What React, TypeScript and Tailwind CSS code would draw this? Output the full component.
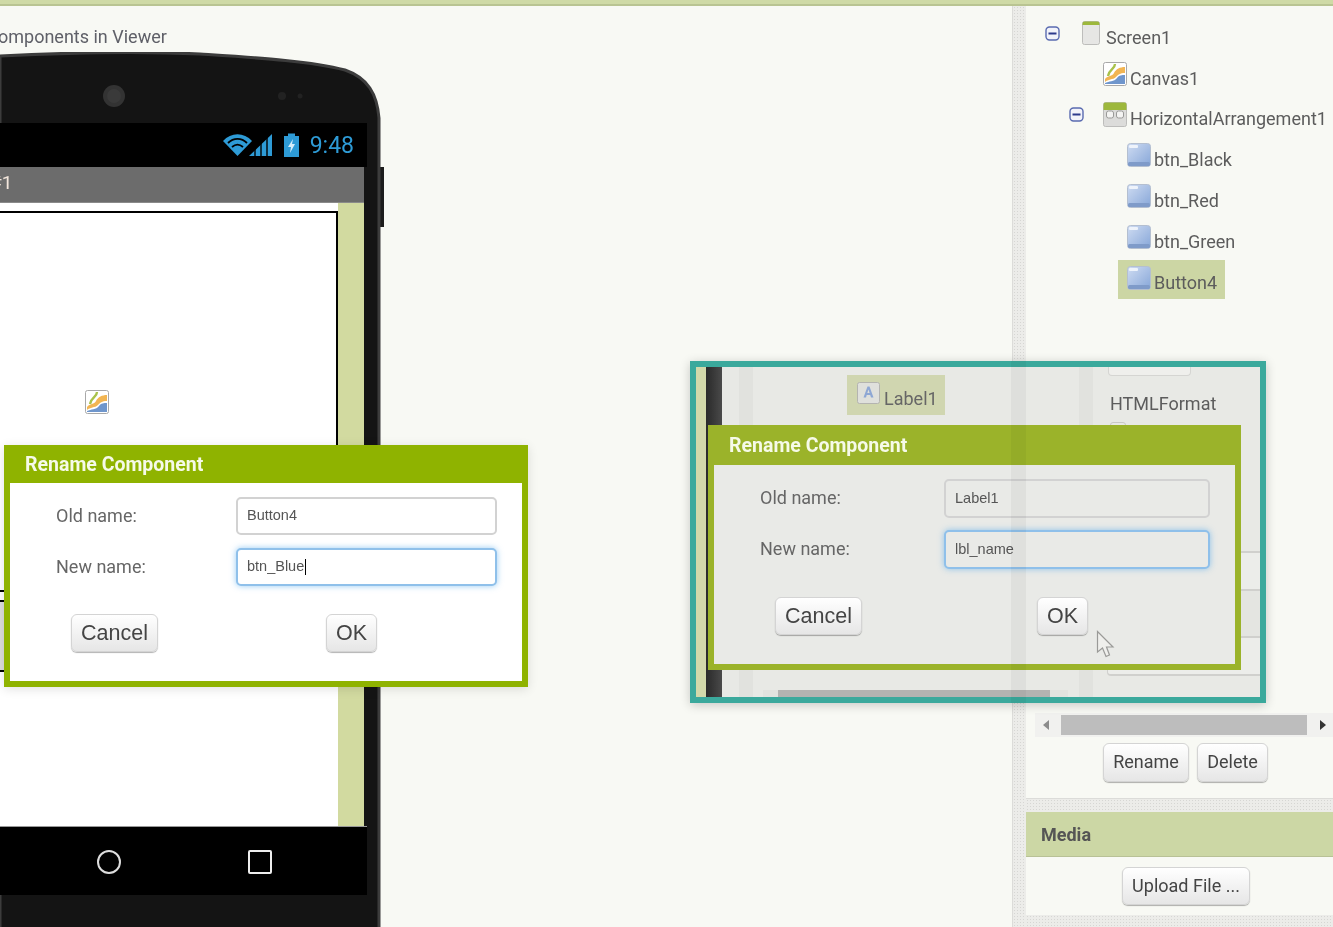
import React from 'react';

const texture = 'bg-[#ecece9] bg-[radial-gradient(#d6d6d3_1px,transparent_1px)] bg-[length:3px_3px]';
const btn = 'flex items-center justify-center rounded-md border border-[#d4d4d4] bg-gradient-to-b from-white to-[#e6e6e6] shadow-[0_1px_1px_rgba(0,0,0,0.3)] text-[#444]';

const MinusBox = () => (
  <svg width="15" height="15" viewBox="0 0 15 15">
    <rect x="1" y="1" width="13" height="13" rx="3.5" fill="#f2f3fa" stroke="#5a6bb0" strokeWidth="1.4" />
    <rect x="3.5" y="6.5" width="8" height="2" fill="#2d3a8c" />
  </svg>
);

const CanvasIcon = () => (
  <svg width="24" height="24" viewBox="0 0 24 24">
    <rect x="0.5" y="0.5" width="23" height="23" rx="2" fill="#fff" stroke="#a8a8a8" />
    <path d="M2 17 C5 13 9 15 11 11 C13 7 17 5 22 5 V11 C17 11 15 13 13 15 C10 18 5 17 2 20 Z" fill="#f2b552" />
    <path d="M2 21 C6 19 11 20 14 16 C16 13 19 13 22 13 V22 H2 Z" fill="#6f96cc" />
    <path d="M12 2 C12 7 6 7 5 14" fill="none" stroke="#a9c24a" strokeWidth="2.4" />
  </svg>
);

const ScreenIcon = () => (
  <svg width="18" height="24" viewBox="0 0 18 24">
    <rect x="0.5" y="0.5" width="17" height="23" rx="2" fill="#e6e6e4" stroke="#bdbdbb" />
    <path d="M0.5 6 V2.5 a2 2 0 0 1 2 -2 h13 a2 2 0 0 1 2 2 V4 H0.5 Z" fill="#9db83c" />
  </svg>
);

const ArrangementIcon = () => (
  <svg width="24" height="25" viewBox="0 0 24 25">
    <rect x="0.5" y="0.5" width="23" height="24" rx="2" fill="#dcdcda" stroke="#bdbdbb" />
    <path d="M0.5 8 V2.5 a2 2 0 0 1 2 -2 h19 a2 2 0 0 1 2 2 V8 Z" fill="#9db83c" />
    <rect x="3.5" y="9" width="7" height="7" rx="2" fill="#f4f4f2" stroke="#9a9a98" />
    <rect x="13.5" y="9" width="7" height="7" rx="2" fill="#f4f4f2" stroke="#9a9a98" />
  </svg>
);

const ButtonIcon = () => (
  <svg width="24" height="24" viewBox="0 0 24 24">
    <defs>
      <linearGradient id="btnfill" x1="0" y1="0" x2="1" y2="1">
        <stop offset="0" stopColor="#cfdcf2" />
        <stop offset="1" stopColor="#86a6d8" />
      </linearGradient>
    </defs>
    <rect x="0.5" y="0.5" width="23" height="23" rx="3" fill="url(#btnfill)" stroke="#b4bfd0" />
    <rect x="2" y="2" width="9" height="3" rx="1" fill="#eef3fb" />
    <rect x="1" y="19" width="22" height="4" rx="1.5" fill="#7f9bc9" />
  </svg>
);

const LabelIcon = () => (
  <svg width="23" height="22" viewBox="0 0 23 22">
    <rect x="0.5" y="0.5" width="22" height="21" rx="2" fill="#dfe0dc" stroke="#b4b4b0" />
    <path d="M6.5 15.5 L10.5 4.5 H12.5 L16.5 15.5 H14 L13.2 13 H9.7 L9 15.5 Z M10.3 11 H12.6 L11.5 7.5 Z" fill="#8ea7d4" />
  </svg>
);

const TreeRow = ({ icon, text, className = '' }: { icon: React.ReactNode; text: string; className?: string }) => (
  <div className={`flex h-[24px] items-start ${className}`}>
    {icon}
    <span className="ml-[3px] mt-[5px] text-[18px] leading-[24px] text-[#5c5c5c]">{text}</span>
  </div>
);

type DialogProps = {
  title: string;
  oldName: string;
  newName: React.ReactNode;
  className: string;
  headerClass: string;
  bodyClass: string;
  labelClass: string;
  inputClass: string;
  rowGapClass: string;
  okGapClass: string;
};

const RenameDialog = ({ title, oldName, newName, className, headerClass, bodyClass, labelClass, inputClass, rowGapClass, okGapClass }: DialogProps) => (
  <div className={`absolute flex flex-col border-[6px] border-t-0 ${className}`}>
    <div className={`flex items-center pt-[2px] pl-[15px] text-[19.5px] font-bold text-[#f6fae8] ${headerClass}`}>{title}</div>
    <div className={`flex-1 pl-[46px] pt-[14px] ${bodyClass}`}>
      <div className="flex items-center">
        <span className={`-mt-[2px] text-[18px] text-[#666] ${labelClass}`}>Old name:</span>
        <div className={`flex items-center rounded-[5px] border-2 border-[#d2d2d2] pl-[9px] font-['Liberation_Sans',sans-serif] text-[14.5px] text-[#555] ${inputClass}`}>{oldName}</div>
      </div>
      <div className={`flex items-center ${rowGapClass}`}>
        <span className={`-mt-[2px] text-[18px] text-[#666] ${labelClass}`}>New name:</span>
        <div className={`flex items-center rounded-[5px] border-2 border-[#8fc0ea] pl-[9px] font-['Liberation_Sans',sans-serif] text-[14.5px] text-[#555] shadow-[0_0_6px_rgba(82,168,236,0.6)] ${inputClass}`}>{newName}</div>
      </div>
      <div className="ml-[15px] mt-[28px] flex font-['Liberation_Sans',sans-serif] text-[21.5px]">
        <div className={`${btn} h-[38px] w-[87px]`}>Cancel</div>
        <div className={`${btn} h-[38px] w-[51px] ${okGapClass}`}>OK</div>
      </div>
    </div>
  </div>
);

const App: React.FC = () => {
  return (
    <div className="relative h-[927px] w-[1333px] overflow-hidden bg-[#f8f9f4] font-['Roboto',sans-serif] blur-[0.4px]">
      <div className="h-[6px] border-b-2 border-[#b9c492] bg-[#cfdaa6]"></div>

      <div className="flex h-[921px]">
        {/* Viewer */}
        <div className="w-[1012px] overflow-hidden">
          <div className="-ml-[2px] mt-[19px] h-[24px] text-[18px] leading-[24px] text-[#5f6068] whitespace-nowrap">omponents in Viewer</div>

          <div className="relative mt-[3px] h-[880px] w-[384px]">
            <svg className="absolute left-0 top-0" width="384" height="880" viewBox="0 0 384 880">
              <path d="M380 115 h4 v60 h-4 Z" fill="#1c1c1c" />
              <path d="M0 4 C60 1 140 -1 200 2 C260 6 310 9 345 18 C368 26 377 42 379 66 V880 H0 Z" fill="#141414" stroke="#3c3c3c" strokeWidth="3" />
              <circle cx="114" cy="44" r="11" fill="#333" />
              <circle cx="114" cy="44" r="7" fill="#3a3a3a" />
              <circle cx="282" cy="44" r="4" fill="#222" />
              <circle cx="300" cy="44" r="2.5" fill="#222" />
            </svg>

            <div className="relative pt-[71px]">
              <div className="flex h-[44px] w-[367px] items-center justify-end bg-black pr-[13px] text-[23px] text-[#2e9bd6]">
                <svg width="50" height="24" viewBox="0 0 50 24" className="mr-[11px]">
                  <path d="M0 8 C8 -1 21 -1 29 8 L14.5 23 Z" fill="#2e9bd6" />
                  <path d="M5 10 C10.5 4.5 18.5 4.5 24 10 M9 14 C12.5 11 16.5 11 20 14" fill="none" stroke="#000" strokeWidth="1.8" />
                  <path d="M26 23 L49 1 V23 Z" fill="#2e9bd6" />
                  <path d="M32 23 V16 M38 23 V10 M44 23 V5" stroke="#000" strokeWidth="1.4" />
                </svg>
                <svg width="15" height="24" viewBox="0 0 15 24" className="mr-[11px]">
                  <path d="M0 3 H4 V0.5 H11 V3 H15 V24 H0 Z" fill="#2e9bd6" />
                  <path d="M9 6 L4 14 H7 L6 20 L11 11 H8 Z" fill="#d6eefa" />
                </svg>
                <span className="leading-none">9:48</span>
              </div>
              <div className="flex h-[36px] w-[364px] items-center border-b border-[#8a8a8a] bg-[#6c6c6c] pb-[3px] text-[19px] text-[#f3e6dc]">
                <span className="-ml-[10px]">#1</span>
              </div>
              <div className="flex h-[623px] w-[364px]">
                <div className="w-[338px] bg-white pt-[8px]">
                  <div className="h-[380px] border-r-2 border-t-2 border-black pl-[85px] pt-[177px]">
                    <CanvasIcon />
                  </div>
                  <div className="-mt-[1px] h-[10px] w-[6px] border-t-2 border-black"></div>
                  <div className="h-[72px] w-[6px] border-y-2 border-black bg-[#ddd]"></div>
                </div>
                <div className="w-[26px] bg-[#d2daa0]"></div>
              </div>
              <div className="flex h-[69px] w-[367px] items-center border-t border-[#999] bg-black pt-[2px]">
                <div className="ml-[97px] h-[24px] w-[24px] rounded-full border-[2px] border-[#ddd]"></div>
                <div className="ml-[127px] h-[24px] w-[24px] rounded-[2px] border-[2px] border-[#eee]"></div>
              </div>
            </div>
          </div>
        </div>

        <div className={`w-[14px] border-l border-[#dcdcd9] ${texture}`}></div>

        {/* Component tree + media */}
        <div className="flex flex-1 flex-col">
          <div className="relative h-[792px] pl-[19px] pt-[15px]">
            <div className="flex h-[24px] items-start">
              <div className="mr-[22px] mt-[5px]"><MinusBox /></div>
              <ScreenIcon />
              <span className="ml-[6px] mt-[5px] text-[18px] leading-[24px] text-[#5c5c5c]">Screen1</span>
            </div>
            <TreeRow className="ml-[58px] mt-[17px]" icon={<CanvasIcon />} text="Canvas1" />
            <div className="ml-[24px] mt-[16px] flex h-[25px] items-start">
              <div className="mr-[19px] mt-[5px]"><MinusBox /></div>
              <ArrangementIcon />
              <span className="ml-[3px] mt-[5px] whitespace-nowrap text-[18px] leading-[24px] text-[#5c5c5c]">HorizontalArrangement1</span>
            </div>
            <TreeRow className="ml-[82px] mt-[16px]" icon={<ButtonIcon />} text="btn_Black" />
            <TreeRow className="ml-[82px] mt-[17px]" icon={<ButtonIcon />} text="btn_Red" />
            <TreeRow className="ml-[82px] mt-[17px]" icon={<ButtonIcon />} text="btn_Green" />
            <div className="ml-[73px] mt-[11px] flex h-[39px] w-[107px] items-start bg-[#ccd6a4] pl-[9px] pt-[6px]">
              <ButtonIcon />
              <span className="ml-[3px] mt-[5px] text-[18px] leading-[24px] text-[#5c5c5c]">Button4</span>
            </div>

            <div className="absolute left-[9px] top-[707px] flex h-[24px] w-[298px] items-center bg-[#f1f1ef]">
              <svg width="26" height="24" viewBox="0 0 26 24"><path d="M14 7 V17 L8 12 Z" fill="#8c8c8c" /></svg>
              <div className="h-[20px] w-[246px] bg-[#bdbdbd]"></div>
              <svg width="26" height="24" viewBox="0 0 26 24"><path d="M13 7 V17 L19 12 Z" fill="#333" /></svg>
            </div>
            <div className="absolute left-[77px] top-[737px] flex gap-[8px] text-[18px]">
              <div className={`${btn} h-[39px] w-[86px] pb-[2px]`}>Rename</div>
              <div className={`${btn} h-[39px] w-[71px] pb-[2px]`}>Delete</div>
            </div>
          </div>

          <div className={`h-[14px] border-t border-[#dcdcd9] ${texture}`}></div>
          <div className="flex h-[45px] items-center border-b border-[#b8c196] bg-[#ccd7a5] pl-[15px] text-[18px] font-bold text-[#555]">Media</div>
          <div className="h-[58px] pl-[96px] pt-[10px]">
            <div className={`${btn} h-[38px] w-[128px] pb-[2px] text-[18px]`}>Upload File ...</div>
          </div>
          <div className={`flex-1 ${texture}`}></div>
        </div>
      </div>

      {/* Left rename dialog */}
      <RenameDialog
        title="Rename Component"
        oldName="Button4"
        newName={<>btn_Blue<span className="ml-px h-[16px] w-px bg-black"></span></>}
        className="left-[4px] top-[445px] h-[242px] w-[524px] border-[#8fb300] shadow-[0_2px_10px_rgba(0,0,0,0.12)]"
        headerClass="h-[38px] bg-[#8fb300]"
        bodyClass="bg-white"
        labelClass="w-[180px]"
        inputClass="h-[38px] w-[261px] bg-white"
        rowGapClass="mt-[13px]"
        okGapClass="ml-[168px]"
      />

      {/* Highlighted inset picture */}
      <div className="absolute left-[690px] top-[361px] flex h-[342px] w-[576px] overflow-hidden border-[6px] border-[#3ba99c] bg-[#e8e9e5] shadow-[0_2px_10px_rgba(0,0,0,0.2)]">
        <div className="w-[10px] bg-[#d2d8aa]"></div>
        <div className="w-[16px] bg-gradient-to-r from-[#2a2a2a] to-[#4a4a4a]"></div>
        <div className="w-[17px]"></div>
        <div className="w-[14px] bg-[#e1e2de]"></div>
        <div className="relative w-[326px]">
          <div className="ml-[94px] mt-[8px] flex h-[40px] w-[98px] items-start bg-[#d0d6b0] pl-[10px] pt-[7px]">
            <LabelIcon />
            <span className="ml-[4px] mt-[5px] text-[18px] leading-[24px] text-[#666]">Label1</span>
          </div>
          <div className="absolute bottom-0 left-[10px] flex h-[7px] w-[305px] items-center bg-[#e2e3df]">
            <div className="ml-[15px] h-[7px] w-[272px] bg-[#b3b3b1]"></div>
          </div>
        </div>
        <div className="w-[14px] bg-[#e1e2de]"></div>
        <div className="relative flex-1 pl-[17px] text-[18px] text-[#5c5c5c]">
          <div className="-ml-[2px] h-[9px] w-[83px] rounded-b-[4px] border border-t-0 border-[#d5d5d2] bg-[#efefec]"></div>
          <div className="mt-[16px] leading-[24px]">HTMLFormat</div>
          <div className="mt-[6px] h-[18px] w-[16px] rounded-[3px] border border-[#c8c8c5]"></div>
          <div className="-ml-[3px] mt-[111px] h-[40px] border-y-2 border-[#d0d0cd] bg-[#ecedea]"></div>
          <div className="-ml-[3px] h-[45px] bg-[#e4e5e1]"></div>
          <div className="-ml-[3px] h-[40px] rounded-bl-[4px] border-y-2 border-l border-[#d0d0cd] bg-[#ecedea]"></div>
        </div>
      </div>
      <RenameDialog
        title="Rename Component"
        oldName="Label1"
        newName="lbl_name"
        className="left-[708px] top-[425px] h-[245px] w-[533px] border-[#9bb32a]"
        headerClass="h-[40px] bg-[#9bb32a]"
        bodyClass="bg-[#e9eae7]"
        labelClass="w-[184px]"
        inputClass="h-[39px] w-[266px] bg-[#e9eae7]"
        rowGapClass="mt-[12px]"
        okGapClass="ml-[175px]"
      />
      {/* splitter showing through the inset */}
      <div className="absolute left-[1011px] top-[361px] h-[342px] w-[15px] bg-black/[0.04]"></div>
      <svg className="absolute left-[1096px] top-[630px]" width="20" height="30" viewBox="0 0 20 30">
        <path d="M1.5 1.5 V22 L6.5 18 L10 26.5 L13.5 25 L10.5 17 H17 Z" fill="#efefec" stroke="#9a9a98" strokeWidth="1.2" />
      </svg>
    </div>
  );
};

export default App;
